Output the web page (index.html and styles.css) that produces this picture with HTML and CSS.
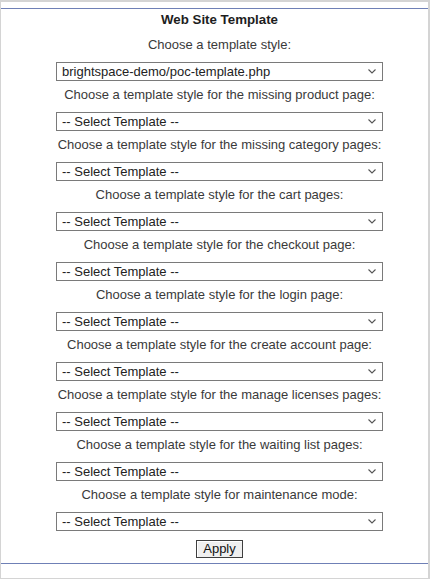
FILE: index.html
```html
<!DOCTYPE html>
<html>
<head>
<meta charset="utf-8">
<link rel="stylesheet" href="styles.css">
</head>
<body>
<div class="frame">
  <form class="panel">
    <h1 class="title">Web Site Template</h1>

    <label class="label">Choose a template style:</label>
    <div class="field">
      <select><option>brightspace-demo/poc-template.php</option></select>
      <svg class="chev" viewBox="0 0 8 5"><polyline points="0.5,0.5 4,4 7.5,0.5"/></svg>
    </div>

    <label class="label">Choose a template style for the missing product page:</label>
    <div class="field">
      <select><option>-- Select Template --</option></select>
      <svg class="chev" viewBox="0 0 8 5"><polyline points="0.5,0.5 4,4 7.5,0.5"/></svg>
    </div>

    <label class="label">Choose a template style for the missing category pages:</label>
    <div class="field">
      <select><option>-- Select Template --</option></select>
      <svg class="chev" viewBox="0 0 8 5"><polyline points="0.5,0.5 4,4 7.5,0.5"/></svg>
    </div>

    <label class="label">Choose a template style for the cart pages:</label>
    <div class="field">
      <select><option>-- Select Template --</option></select>
      <svg class="chev" viewBox="0 0 8 5"><polyline points="0.5,0.5 4,4 7.5,0.5"/></svg>
    </div>

    <label class="label">Choose a template style for the checkout page:</label>
    <div class="field">
      <select><option>-- Select Template --</option></select>
      <svg class="chev" viewBox="0 0 8 5"><polyline points="0.5,0.5 4,4 7.5,0.5"/></svg>
    </div>

    <label class="label">Choose a template style for the login page:</label>
    <div class="field">
      <select><option>-- Select Template --</option></select>
      <svg class="chev" viewBox="0 0 8 5"><polyline points="0.5,0.5 4,4 7.5,0.5"/></svg>
    </div>

    <label class="label">Choose a template style for the create account page:</label>
    <div class="field">
      <select><option>-- Select Template --</option></select>
      <svg class="chev" viewBox="0 0 8 5"><polyline points="0.5,0.5 4,4 7.5,0.5"/></svg>
    </div>

    <label class="label">Choose a template style for the manage licenses pages:</label>
    <div class="field">
      <select><option>-- Select Template --</option></select>
      <svg class="chev" viewBox="0 0 8 5"><polyline points="0.5,0.5 4,4 7.5,0.5"/></svg>
    </div>

    <label class="label">Choose a template style for the waiting list pages:</label>
    <div class="field">
      <select><option>-- Select Template --</option></select>
      <svg class="chev" viewBox="0 0 8 5"><polyline points="0.5,0.5 4,4 7.5,0.5"/></svg>
    </div>

    <label class="label">Choose a template style for maintenance mode:</label>
    <div class="field last">
      <select><option>-- Select Template --</option></select>
      <svg class="chev" viewBox="0 0 8 5"><polyline points="0.5,0.5 4,4 7.5,0.5"/></svg>
    </div>

    <div class="actions"><button type="button" class="apply">Apply</button></div>
  </form>
</div>
</body>
</html>
```

FILE: styles.css
```css
html, body {
  margin: 0;
  padding: 0;
}
body {
  background: #d4d4d4;
  font-family: "Liberation Sans", Arial, sans-serif;
  font-size: 13px;
  height: 579px;
  overflow: hidden;
}
.frame {
  margin: 2px 2px 1px 1px;
  width: 427px;
  height: 576px;
  background: #ffffff;
  padding-top: 6px;
  box-sizing: border-box;
}
.panel {
  margin: 0;
  border-top: 1px solid #6f80b6;
  border-bottom: 1px solid #6f80b6;
  padding: 3px 0 5px 10px;
  display: flex;
  flex-direction: column;
  align-items: center;
}
.title {
  margin: 0;
  font-size: 13.3px;
  line-height: 16px;
  font-weight: bold;
  color: #1e1e1e;
  margin-bottom: 9px;
}
.label {
  display: block;
  line-height: 16px;
  color: #3a3a3a;
  white-space: nowrap;
}
.field {
  position: relative;
  width: 327px;
  margin: 9px 0 6px;
}
.field.last {
  margin-bottom: 9px;
}
.field select {
  appearance: none;
  -webkit-appearance: none;
  display: block;
  width: 100%;
  height: 19px;
  margin: 0;
  border: 1px solid #7a7a7a;
  border-radius: 0;
  background: #ffffff;
  padding: 0 20px 0 5px;
  font-family: "Liberation Sans", Arial, sans-serif;
  font-size: 13px;
  color: #222222;
  outline: none;
}
.chev {
  position: absolute;
  right: 7px;
  top: 7px;
  width: 8px;
  height: 5px;
  pointer-events: none;
}
.chev polyline {
  fill: none;
  stroke: #555555;
  stroke-width: 1.1;
}
.actions {
  display: flex;
  justify-content: center;
}
.apply {
  height: 18px;
  padding: 0 6px;
  margin: 0;
  border: 1px solid #3f3f3f;
  border-radius: 0;
  background: #efefef;
  box-shadow: inset 1px 1px 0 #ffffff;
  font-family: "Liberation Sans", Arial, sans-serif;
  font-size: 13px;
  line-height: 16px;
  color: #111111;
}
```
